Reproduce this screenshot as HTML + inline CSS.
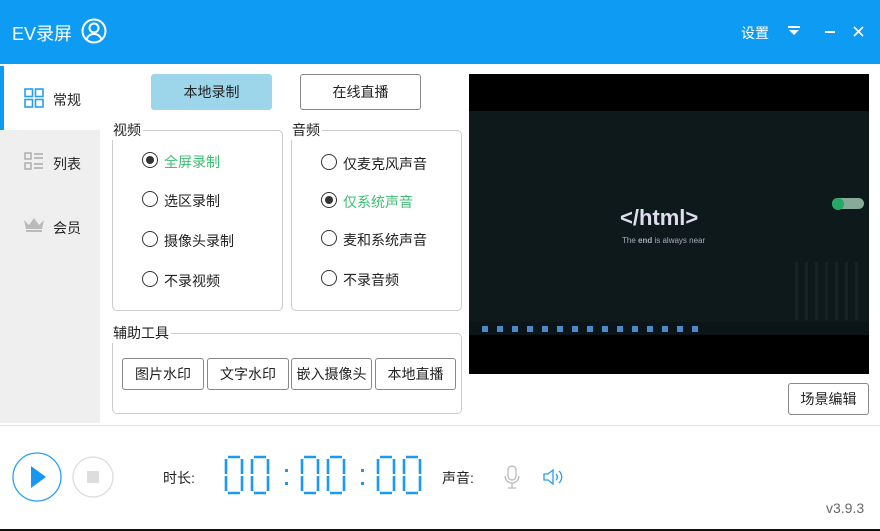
<!DOCTYPE html>
<html><head><meta charset="utf-8"><style>
*{margin:0;padding:0;box-sizing:border-box}
body{width:880px;height:531px;position:relative;background:#fff;font-family:"Liberation Sans","Noto Sans CJK SC",sans-serif;font-size:14px;color:#222;overflow:hidden}
.a{position:absolute}
.btn{position:absolute;border:1px solid #888;border-radius:3px;background:#fff;text-align:center;font-size:14px}
.grp{position:absolute;border:1px solid #ccc;border-radius:5px}
.lbl{position:absolute;background:#fff;font-size:14px;padding:0 2px}
.rad{position:absolute;width:16px;height:16px;border:1.5px solid #333;border-radius:50%;background:#fff}
.rad.on::after{content:"";position:absolute;left:2.5px;top:2.5px;width:8px;height:8px;border-radius:50%;background:#333}
.rt{position:absolute;font-size:14px}
</style></head><body>
<div class="a" style="left:0;top:0;width:880px;height:64px;background:#0d9bf4"></div>
<div class="a" style="left:12px;top:20px;color:#fff;font-size:18px">EV录屏</div>
<svg class="a" style="left:81px;top:18px" width="26" height="26" viewBox="0 0 26 26"><circle cx="13" cy="13" r="11.5" fill="none" stroke="#fff" stroke-width="2"/><circle cx="13" cy="10" r="4.5" fill="none" stroke="#fff" stroke-width="2"/><path d="M5.5 21c2-4 5-5 7.5-5s5.5 1 7.5 5" fill="none" stroke="#fff" stroke-width="2"/></svg>
<div class="a" style="left:741px;top:23px;color:#fff;font-size:14px">设置</div>
<svg class="a" style="left:788px;top:26px" width="12" height="10"><rect x="0" y="0" width="12" height="2" fill="#fff"/><path d="M1 4h10l-5 5z" fill="#fff"/></svg>
<div class="a" style="left:825px;top:31px;width:10px;height:2px;background:#fff"></div>
<svg class="a" style="left:853px;top:26px" width="11" height="11"><path d="M1 1l9 9M10 1l-9 9" stroke="#fff" stroke-width="1.6"/></svg>

<div class="a" style="left:0;top:130px;width:100px;height:293px;background:#efefef"></div>
<div class="a" style="left:0;top:66px;width:4px;height:64px;background:#0d9bf4"></div>
<svg class="a" style="left:24px;top:88px" width="20" height="20"><g fill="none" stroke="#2a9ef0" stroke-width="1.6"><rect x="1" y="1" width="7.5" height="7.5"/><rect x="11.5" y="1" width="7.5" height="7.5"/><rect x="1" y="11.5" width="7.5" height="7.5"/><rect x="11.5" y="11.5" width="7.5" height="7.5"/></g></svg>
<div class="a" style="left:53px;top:90px">常规</div>
<svg class="a" style="left:24px;top:152px" width="20" height="20"><g fill="none" stroke="#aaa" stroke-width="1.4"><rect x="1" y="1" width="6" height="6"/><rect x="1" y="11" width="6" height="6"/></g><g stroke="#aaa" stroke-width="1.4"><path d="M10 2h9M10 6h9M10 12h9M10 16h9"/></g></svg>
<div class="a" style="left:53px;top:154px">列表</div>
<svg class="a" style="left:23px;top:217px" width="22" height="16"><path d="M1 3l5 5 5-7 5 7 5-5-2 9H3z" fill="#bbb"/><rect x="3" y="13" width="16" height="2" fill="#bbb"/></svg>
<div class="a" style="left:53px;top:218px">会员</div>

<div class="btn" style="left:151px;top:74px;width:121px;height:36px;background:#9dd6ea;border-color:#9dd6ea;line-height:34px">本地录制</div>
<div class="btn" style="left:300px;top:74px;width:121px;height:36px;line-height:34px">在线直播</div>

<div class="grp" style="left:112px;top:130px;width:171px;height:181px"></div>
<div class="lbl" style="left:111px;top:120px">视频</div>
<div class="rad on" style="left:142px;top:152px"></div><div class="rt" style="left:164px;top:152px;color:#3cbf73">全屏录制</div>
<div class="rad" style="left:142px;top:191px"></div><div class="rt" style="left:164px;top:191px">选区录制</div>
<div class="rad" style="left:142px;top:231px"></div><div class="rt" style="left:164px;top:231px">摄像头录制</div>
<div class="rad" style="left:142px;top:271px"></div><div class="rt" style="left:164px;top:271px">不录视频</div>

<div class="grp" style="left:291px;top:130px;width:171px;height:181px"></div>
<div class="lbl" style="left:290px;top:120px">音频</div>
<div class="rad" style="left:321px;top:154px"></div><div class="rt" style="left:343px;top:154px">仅麦克风声音</div>
<div class="rad on" style="left:321px;top:192px"></div><div class="rt" style="left:343px;top:192px;color:#3cbf73">仅系统声音</div>
<div class="rad" style="left:321px;top:230px"></div><div class="rt" style="left:343px;top:230px">麦和系统声音</div>
<div class="rad" style="left:321px;top:270px"></div><div class="rt" style="left:343px;top:270px">不录音频</div>

<div class="grp" style="left:112px;top:333px;width:350px;height:81px"></div>
<div class="lbl" style="left:111px;top:323px">辅助工具</div>
<div class="btn" style="left:122px;top:358px;width:82px;height:32px;line-height:30px">图片水印</div>
<div class="btn" style="left:207px;top:358px;width:82px;height:32px;line-height:30px">文字水印</div>
<div class="btn" style="left:291px;top:358px;width:81px;height:32px;line-height:30px">嵌入摄像头</div>
<div class="btn" style="left:375px;top:358px;width:81px;height:32px;line-height:30px">本地直播</div>

<div class="a" style="left:469px;top:74px;width:400px;height:300px;background:#000"></div>
<div class="a" style="left:469px;top:111px;width:400px;height:224px;background:#0e191b"></div>
<div class="a" style="left:469px;top:322px;width:400px;height:13px;background:#0b1416"></div>
<div class="a" style="left:620px;top:205px;color:#dde;font-size:22px;font-weight:bold">&lt;/html&gt;</div>
<div class="a" style="left:622px;top:236px;color:#aab;font-size:8px">The <b>end</b> is always near</div>
<div class="a" style="left:832px;top:198px;width:32px;height:11px;border-radius:6px;background:#8a9;"></div>
<div class="a" style="left:832px;top:198px;width:12px;height:12px;border-radius:50%;background:#2a6"></div>
<div class="a" style="left:795px;top:262px;width:70px;height:58px;background:repeating-linear-gradient(90deg,#2a3436 0 3px,transparent 3px 10px);opacity:.35"></div>
<div class="a" style="left:482px;top:326px;width:220px;height:6px;background:repeating-linear-gradient(90deg,#4a8ac8 0 6px,transparent 6px 15px)"></div>

<div class="btn" style="left:788px;top:383px;width:81px;height:32px;line-height:30px">场景编辑</div>

<div class="a" style="left:0;top:425px;width:880px;height:1px;background:#e4e4e4"></div>
<svg class="a" style="left:12px;top:452px" width="110" height="52"><circle cx="25" cy="25" r="24" fill="none" stroke="#2a9ef0" stroke-width="1.3"/><path d="M19 14v22l15-11z" fill="#1797f2"/><circle cx="81" cy="25" r="20" fill="none" stroke="#ddd" stroke-width="1.3"/><rect x="75" y="19" width="12" height="12" fill="#ddd"/></svg>
<div class="a" style="left:163px;top:468px">时长:</div>
<svg class="a" style="left:220px;top:455px" width="205" height="42">
<defs><g id="z" fill="none" stroke="#1a9af2" stroke-width="2.6"><path d="M4 2h12M4 38h12M2 4v15M2 21v15M18 4v15M18 21v15"/></g></defs>
<use href="#z" x="4"/><use href="#z" x="30"/><use href="#z" x="80"/><use href="#z" x="106"/><use href="#z" x="156"/><use href="#z" x="182"/>
<rect x="65" y="14" width="3" height="3" fill="#1a9af2"/><rect x="65" y="27" width="3" height="3" fill="#1a9af2"/>
<rect x="141" y="14" width="3" height="3" fill="#1a9af2"/><rect x="141" y="27" width="3" height="3" fill="#1a9af2"/>
</svg>
<div class="a" style="left:442px;top:468px">声音:</div>
<svg class="a" style="left:503px;top:465px" width="18" height="25"><rect x="5" y="1" width="8" height="14" rx="4" fill="none" stroke="#bbb" stroke-width="1.3"/><path d="M2 11a7 7 0 0 0 14 0M9 18v5M5 23h8" fill="none" stroke="#bbb" stroke-width="1.3"/></svg>
<svg class="a" style="left:542px;top:468px" width="22" height="18"><path d="M2 6h4l5-4v14l-5-4H2z" fill="none" stroke="#2a9ef0" stroke-width="1.3"/><path d="M14 6a4 4 0 0 1 0 6M17 3a8 8 0 0 1 0 12" fill="none" stroke="#2a9ef0" stroke-width="1.3"/></svg>
<div class="a" style="left:826px;top:500px;color:#666;font-size:14px">v3.9.3</div>
<div class="a" style="left:0;top:529px;width:880px;height:2px;background:#111"></div>
</body></html>
